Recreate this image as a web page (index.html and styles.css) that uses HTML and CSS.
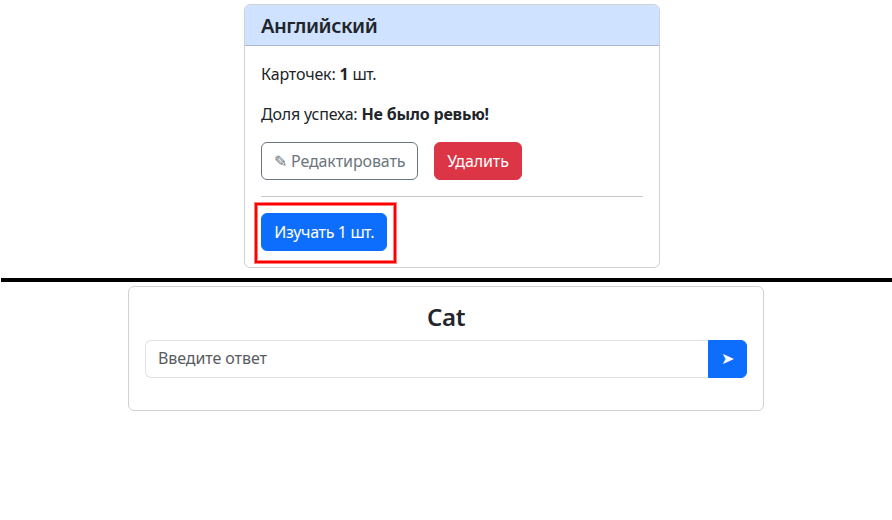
FILE: index.html
```
<!DOCTYPE html>
<html lang="ru">
<head>
<meta charset="utf-8">
<title>Английский</title>
<link rel="stylesheet" href="styles.css">
</head>
<body>
<section class="card deck">
  <h1 class="card-header">Английский</h1>
  <div class="card-body">
    <p class="count">Карточек: <b>1</b> <span class="unit">шт.</span></p>
    <p class="rate">Доля успеха: <b>Не было ревью!</b></p>
    <div class="actions">
      <button class="btn outline">✎ Редактировать</button>
      <button class="btn danger">Удалить</button>
    </div>
    <hr>
    <div class="highlighted">
      <button class="btn primary study">Изучать 1 <span class="unit">шт.</span></button>
    </div>
  </div>
</section>
<div class="divider"></div>
<section class="card review">
  <h2>Cat</h2>
  <form class="answer">
    <input type="text" placeholder="Введите ответ">
    <button class="btn primary send" type="button">➤</button>
  </form>
</section>
</body>
</html>
```
FILE: styles.css
```
*, *::after { box-sizing: border-box; }
body {
  margin: 0;
  padding-top: 4px;
  background: #fff;
  color: #212529;
  font: 16px/24px "Noto Sans", "Liberation Sans", sans-serif;
}
.card {
  border: 1px solid #d0d1d2;
  border-radius: 6px;
  background: #fff;
}
.deck { width: 416px; height: 264px; margin-left: 244px; }
.card-header {
  margin: 0;
  height: 41px;
  padding: 9px 16px 7px;
  border-bottom: 1px solid #aab9d3;
  border-radius: 5px 5px 0 0;
  background: #cfe2ff;
  font: 560 20px/24px "Noto Sans", sans-serif;
  letter-spacing: -0.5px;
}
.card-body { padding: 16px; }
p { margin: 0 0 16px; }
b { font-weight: 700; }
.count { letter-spacing: -0.16px; }
.rate { letter-spacing: -0.19px; }
.unit { letter-spacing: -0.7px; }
.actions { display: flex; gap: 16px; }
.btn {
  height: 38px;
  padding: 6px 12px;
  border: 1px solid;
  border-radius: 6px;
  font: inherit;
  white-space: nowrap;
}
.outline { width: 157px; background: #fff; border-color: #6c757d; color: #6c757d; letter-spacing: -0.1px; }
.danger { width: 88px; background: #dc3545; border-color: #dc3545; color: #fff; letter-spacing: -0.1px; }
.primary { background: #0d6efd; border-color: #0d6efd; color: #fff; }
hr { margin: 16px 0; border: 0; border-top: 1px solid #c8c9ca; }
.highlighted { position: relative; display: flex; }
.highlighted::after {
  content: "";
  position: absolute;
  left: -6px;
  top: -10px;
  width: 141px;
  height: 60px;
  border: 2px solid #f00;
  box-shadow: 0 0 0 1px rgba(255, 0, 0, .5), inset 0 0 0 1px rgba(255, 0, 0, .5);
}
.study { width: 126px; letter-spacing: -0.35px; }
.divider { height: 4px; margin: 10px 0 4px 1px; background: #000; }
.review { width: 636px; height: 125px; margin-left: 128px; padding: 15px 16px; }
h2 { margin: 0 0 9px; font: 560 24px/29px "Noto Sans", sans-serif; letter-spacing: -0.3px; text-align: center; }
.answer { display: flex; }
input {
  flex: 1;
  height: 38px;
  padding: 5px 12px 7px;
  border: 1px solid #dee2e6;
  border-right: 0;
  border-radius: 6px 0 0 6px;
  font: inherit;
  letter-spacing: -0.08px;
}
input::placeholder { color: #595c5f; opacity: 1; }
.send { width: 39px; padding: 5px 12px 7px; border-radius: 0 6px 6px 0; }
```
